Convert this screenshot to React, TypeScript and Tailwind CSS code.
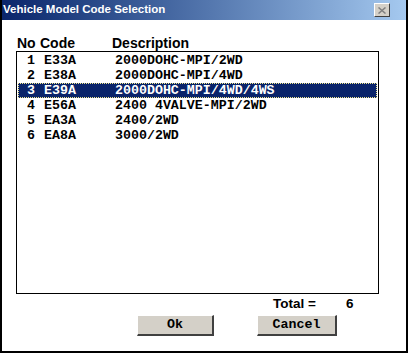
import React from 'react'

const rows = [
  { no: 1, code: 'E33A', desc: '2000DOHC-MPI/2WD' },
  { no: 2, code: 'E38A', desc: '2000DOHC-MPI/4WD' },
  { no: 3, code: 'E39A', desc: '2000DOHC-MPI/4WD/4WS' },
  { no: 4, code: 'E56A', desc: '2400 4VALVE-MPI/2WD' },
  { no: 5, code: 'EA3A', desc: '2400/2WD' },
  { no: 6, code: 'EA8A', desc: '3000/2WD' },
]

const mono = "font-['Liberation_Mono','DejaVu_Sans_Mono',monospace] font-bold text-[13.3px]"
const sans = "font-['Liberation_Sans',Arial,sans-serif] font-bold"

function WinButton({ label, width }: { label: string; width: string }) {
  return (
    <button
      className={`${width} h-[21px] bg-[#d4d0c8] border-t border-l border-t-white border-l-white border-b-2 border-r-2 border-b-[#404040] border-r-[#404040] flex items-center justify-center text-black ${mono} leading-none`}
    >
      {label}
    </button>
  )
}

export default function App() {
  const selected = 3

  return (
    <div className="w-[408px] h-[353px] bg-white flex flex-col border-x-2 border-b-2 border-black overflow-hidden">
      {/* Title bar */}
      <div className="-mx-[2px] h-[20px] shrink-0 flex items-center justify-between pl-[3px] pr-[18px] bg-gradient-to-r from-[#0a246a] to-[#a6caf0]">
        <span className={`${sans} text-[11.5px] text-white leading-none`}>Vehicle Model Code Selection</span>
        <div className="w-[16px] h-[14px] bg-[#d4d0c8] border-t border-l border-t-white border-l-white border-b border-r border-b-[#404040] border-r-[#404040] flex items-center justify-center">
          <svg width="8" height="7" viewBox="0 0 8 7">
            <path d="M0.5 0.5 L7.5 6.5 M7.5 0.5 L0.5 6.5" stroke="#808080" strokeWidth="1.5" />
          </svg>
        </div>
      </div>

      {/* Body */}
      <div className="flex flex-col pl-[14px] pt-[15px]">
        <div className={`flex h-[16px] ${sans} text-[14px] leading-[16px] text-black`}>
          <span className="w-[24px] pl-[1px]">No</span>
          <span className="w-[72px]">Code</span>
          <span>Description</span>
        </div>

        <div className="w-[363px] h-[243px] border border-black p-[1px]">
          {rows.map((r) => {
            const sel = r.no === selected
            return (
              <div
                key={r.no}
                className={`flex h-[15px] items-center leading-[15px] ${mono} ${
                  sel ? 'bg-[#0a246a] text-white outline outline-1 outline-dotted outline-[#f0e68c] -outline-offset-1' : 'text-black'
                }`}
              >
                <span className="w-[17px] text-right">{r.no}</span>
                <span className="w-[9px]" />
                <span className="w-[71px]">{r.code}</span>
                <span>{r.desc}</span>
              </div>
            )
          })}
        </div>

        <div className={`flex h-[15px] mt-[2px] ${sans} text-[13.5px] leading-[15px] text-black`}>
          <span className="ml-[257px] w-[73px]">Total =</span>
          <span>6</span>
        </div>

        <div className="flex mt-[4px]">
          <div className="ml-[121px]">
            <WinButton label="Ok" width="w-[77px]" />
          </div>
          <div className="ml-[43px]">
            <WinButton label="Cancel" width="w-[80px]" />
          </div>
        </div>
      </div>
    </div>
  )
}
